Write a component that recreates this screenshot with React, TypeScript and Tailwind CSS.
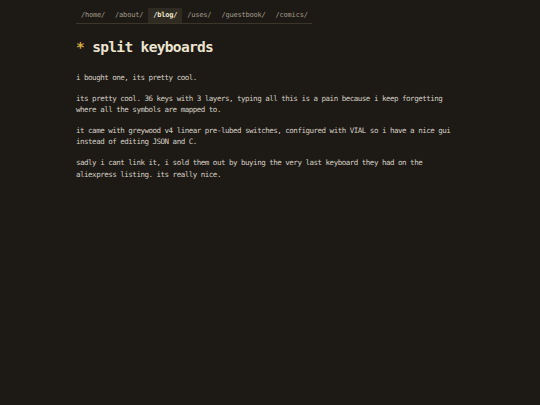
const links = ["/home/", "/about/", "/blog/", "/uses/", "/guestbook/", "/comics/"];

export default function App() {
  return (
    <div className="min-h-screen bg-[#1d1a16] font-['DejaVu_Sans_Mono',monospace] text-[#d6cfc2]">
      <div className="mx-auto w-[388px] pt-[8px]">
        {/* nav */}
        <nav className="flex w-[236px] border-b border-[#3b3629]">
          {links.map((l) => (
            <a
              key={l}
              className={
                l === "/blog/"
                  ? "bg-[#2f2b22] px-[5px] text-[7px] leading-[15px] tracking-[-0.2px] text-[#f0e6cc] font-bold"
                  : "px-[5px] text-[7px] leading-[15px] tracking-[-0.2px] text-[#a39b8b]"
              }
            >
              {l}
            </a>
          ))}
        </nav>

        <h1 className="mt-[13px] text-[14.5px] font-bold leading-[20px] tracking-[-0.66px] text-[#ece4d0]">
          <span className="text-[#d6a947]">*</span> split keyboards
        </h1>

        {/* post body */}
        <article className="mt-[15px] pr-[8px] text-[7.5px] leading-[11.5px] tracking-[-0.49px] flex flex-col gap-[9.2px]">
          <p>i bought one, its pretty cool.</p>
          <p>
            its pretty cool. 36 keys with 3 layers, typing all this is a pain because i keep forgetting where all
            the symbols are mapped to.
          </p>
          <p>
            it came with greywood v4 linear pre-lubed switches, configured with VIAL so i have a nice gui instead
            of editing JSON and C.
          </p>
          <p>
            sadly i cant link it, i sold them out by buying the very last keyboard they had on the aliexpress
            listing. its really nice.
          </p>
        </article>
      </div>
    </div>
  );
}
